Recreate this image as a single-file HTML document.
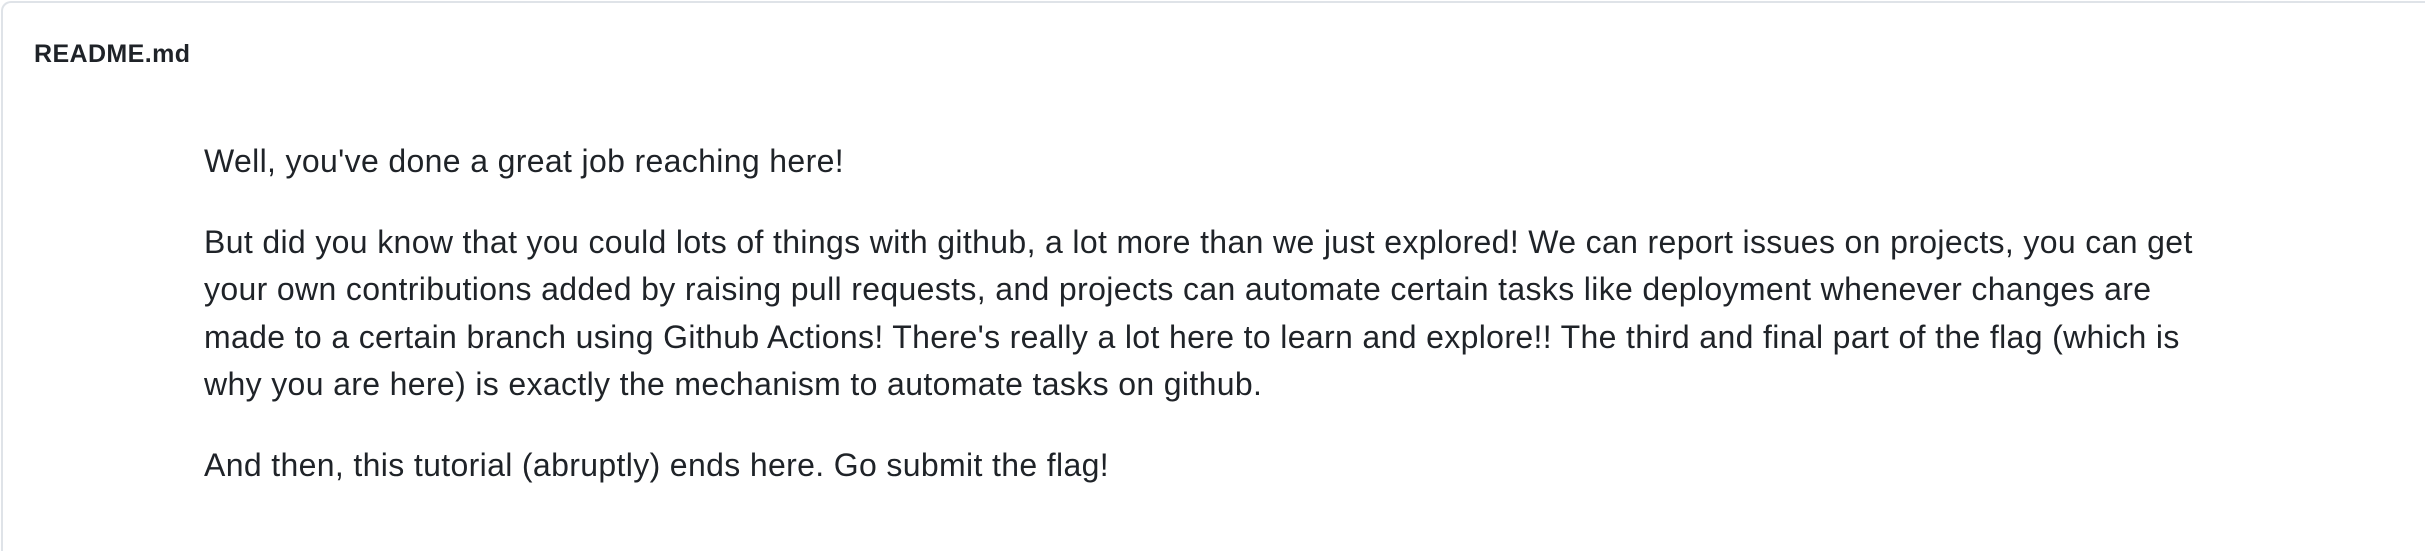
<!DOCTYPE html>
<html><head><meta charset="utf-8"><style>
html,body{margin:0;padding:0;background:#fff;width:2425px;height:551px;overflow:hidden;position:relative}
.box{position:absolute;left:1px;top:1px;width:2424px;height:550px;border:2px solid #dfe3e8;border-right:none;border-bottom:none;border-top-left-radius:10px;box-sizing:border-box}
.h{position:absolute;left:34px;top:40px;font:bold 25px/28px "Liberation Sans",sans-serif;letter-spacing:0.4px;color:#1f2328}
.c{position:absolute;left:204px;top:138px;font:32px/47.5px "Liberation Sans",sans-serif;letter-spacing:0.35px;color:#1f2328;white-space:nowrap}
p{margin:0 0 33px 0}
</style></head><body>
<div class="box"></div>
<div class="h">README.md</div>
<div class="c">
<p>Well, you've done a great job reaching here!</p>
<p>But did you know that you could lots of things with github, a lot more than we just explored! We can report issues on projects, you can get<br>your own contributions added by raising pull requests, and projects can automate certain tasks like deployment whenever changes are<br>made to a certain branch using Github Actions! There's really a lot here to learn and explore!! The third and final part of the flag (which is<br>why you are here) is exactly the mechanism to automate tasks on github.</p>
<p>And then, this tutorial (abruptly) ends here. Go submit the flag!</p>
</div>
</body></html>
